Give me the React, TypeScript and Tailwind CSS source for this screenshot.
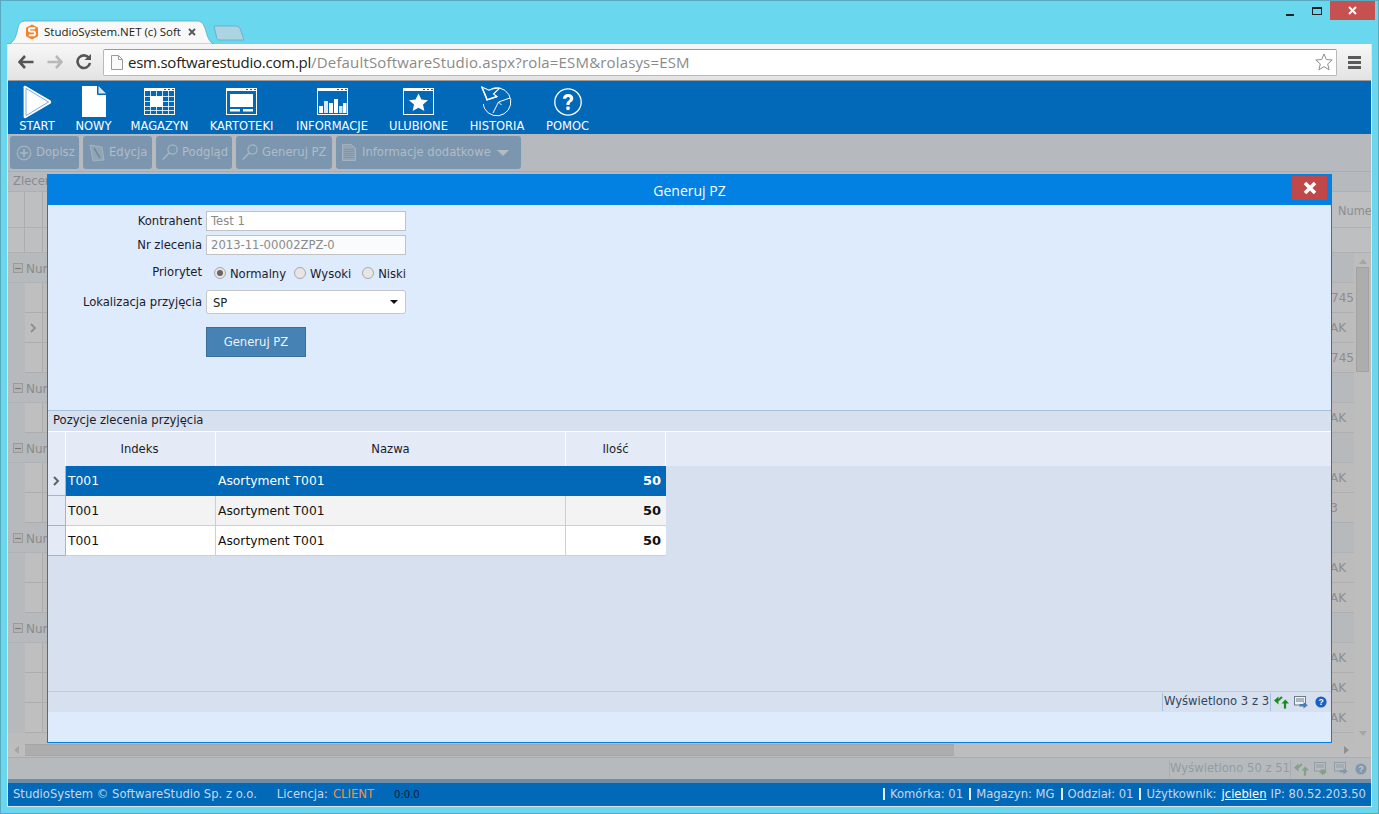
import React from "react";

const V = "font-['DejaVu_Sans',Verdana,sans-serif]";

function Play() {
  return (
    <svg width="29" height="34" viewBox="0 0 29 34">
      <path d="M2.4 0.8 L27.6 15.6 Q29 17 27.6 18.4 L2.4 33.2 Q0.6 33.6 0.6 31.8 V2.2 Q0.6 0.4 2.4 0.8 Z" fill="#fff" />
      <path d="M3 3.4 L25.6 17 L3 30.6 Z" fill="none" stroke="#5b9ad0" strokeWidth="0.8" />
    </svg>
  );
}
function Doc() {
  return (
    <svg width="24" height="31" viewBox="0 0 24 31">
      <path d="M0 0 H15 V8 Q15 9 16 9 H24 V31 H0 Z" fill="#fff" />
      <path d="M16.5 0 L24 7.5 H16.5 Z" fill="#d7e6f3" />
    </svg>
  );
}
function WinFrame({ children }: { children?: React.ReactNode }) {
  return (
    <svg width="31" height="27" viewBox="0 0 31 27">
      <rect x="0.5" y="0.5" width="30" height="26" fill="none" stroke="#fff" />
      <rect x="0" y="0" width="31" height="3" fill="#fff" />
      <rect x="20" y="1" width="2" height="1" fill="#0268b8" />
      <rect x="24" y="1" width="2" height="1" fill="#0268b8" />
      <rect x="28" y="1" width="2" height="1" fill="#0268b8" />
      {children}
    </svg>
  );
}
function Grid3() {
  return (
    <WinFrame>
      {[6.5, 12.5, 18.5, 24.5].map((x) => (
        <line key={x} x1={x} x2={x} y1="3" y2="27" stroke="#fff" strokeWidth="0.8" />
      ))}
      {[8.5, 13.5, 18.5, 22.5].map((y) => (
        <line key={y} x1="0" x2="31" y1={y} y2={y} stroke="#fff" strokeWidth="0.8" />
      ))}
      <rect x="6" y="8" width="13" height="11" fill="#fff" />
    </WinFrame>
  );
}
function Card() {
  return (
    <WinFrame>
      <rect x="4" y="6" width="23" height="13" fill="#fff" />
      <rect x="4" y="21" width="10" height="2.5" fill="#fff" />
      <rect x="17" y="21" width="10" height="2.5" fill="#fff" />
    </WinFrame>
  );
}
function Chart() {
  return (
    <WinFrame>
      <rect x="2" y="18" width="4" height="7" fill="#fff" />
      <rect x="7" y="13" width="4" height="12" fill="#d7e6f3" />
      <rect x="12" y="15" width="4" height="10" fill="#fff" />
      <rect x="17" y="11" width="4" height="14" fill="#fff" />
      <rect x="22" y="18" width="3.5" height="7" fill="#d7e6f3" />
      <rect x="26" y="15" width="3.5" height="10" fill="#fff" />
    </WinFrame>
  );
}
function StarWin() {
  return (
    <WinFrame>
      <path d="M15.5 5.5 L18.4 11.5 L25 12.2 L20 16.6 L21.4 23 L15.5 19.8 L9.6 23 L11 16.6 L6 12.2 L12.6 11.5 Z" fill="#fff" />
    </WinFrame>
  );
}
function Hist() {
  return (
    <svg width="32" height="32" viewBox="0 0 32 32">
      <path d="M8 4.2 A14 14 0 1 1 3.6 22.6" fill="none" stroke="#fff" strokeWidth="1" />
      <path d="M3.6 22.6 A14 14 0 0 1 2.4 18" fill="none" stroke="#fff" strokeWidth="1" />
      <path d="M0.8 1 L8 4.2 C11 2.6 15 1.8 18.5 2.2 L12.5 8 L16 10.5 L6.2 13.8 L4.4 9 L0.8 1 Z" fill="#0268b8" stroke="#fff" strokeWidth="1.1" />
      <path d="M0.8 1 L6 13.8 L16 10.5" fill="none" stroke="#fff" strokeWidth="1.4" />
      <path d="M29 12 L17.5 16 L12 27 M17.5 16 L20.5 19" stroke="#fff" strokeWidth="1" fill="none" />
    </svg>
  );
}
function Help() {
  return (
    <svg width="28" height="28" viewBox="0 0 28 28">
      <circle cx="14" cy="14" r="13.2" fill="none" stroke="#fff" strokeWidth="1.3" />
      <path d="M9 10.8 C9 7.8 11.2 6 14.2 6 C17.3 6 19.3 7.8 19.3 10.4 C19.3 12.4 18 13.4 16.8 14.3 C15.7 15.1 15.6 15.7 15.6 17 H12.4 C12.4 15.2 12.7 14 14.2 12.9 C15.3 12.1 15.9 11.6 15.9 10.6 C15.9 9.6 15.2 9 14.1 9 C13 9 12.3 9.8 12.2 10.8 Z" fill="#fff" />
      <rect x="12.3" y="18.6" width="3.4" height="3.4" rx="0.8" fill="#fff" />
    </svg>
  );
}

function NavItem({ w, label, children }: { w: string; label: string; children: React.ReactNode }) {
  return (
    <div className={`${w} flex flex-col items-center`}>
      <div className="h-[35px] flex items-center justify-center">{children}</div>
      <div className="text-[11.5px] leading-[13px] mt-[1px] text-white whitespace-nowrap">{label}</div>
    </div>
  );
}

function TbIconPlus() {
  return (
    <svg width="16" height="16" viewBox="0 0 16 16">
      <circle cx="8" cy="8" r="6.8" fill="none" stroke="#a9b6c2" strokeWidth="1.2" />
      <path d="M8 4 V12 M4 8 H12" stroke="#a9b6c2" strokeWidth="1.6" />
    </svg>
  );
}
function TbIconEdit() {
  return (
    <svg width="16" height="18" viewBox="0 0 16 18">
      <path d="M1 1 L13 3 L15 16 L4 17 Z" fill="#93a5b5" stroke="#a9b6c2" strokeWidth="0.8" />
      <path d="M5 4 L11 14" stroke="#6f889e" strokeWidth="1.5" />
    </svg>
  );
}
function TbIconSearch() {
  return (
    <svg width="16" height="17" viewBox="0 0 16 17">
      <circle cx="10.5" cy="5.5" r="4.6" fill="none" stroke="#a9b6c2" strokeWidth="1.2" />
      <path d="M7 9 L0.8 15.5" stroke="#a9b6c2" strokeWidth="1.6" />
    </svg>
  );
}
function TbIconDoc() {
  return (
    <svg className="mr-[2px]" width="14" height="17" viewBox="0 0 14 17">
      <path d="M0.5 0.5 H9.5 L13.5 4.5 V16.5 H0.5 Z" fill="#93a5b5" stroke="#a4b2bf" />
      {[5, 7, 9, 11, 13].map((y) => (
        <line key={y} x1="2" x2="12" y1={y + 0.5} y2={y + 0.5} stroke="#7b96ae" />
      ))}
    </svg>
  );
}

function TbButton({ w, children, label }: { w: string; children: React.ReactNode; label: string }) {
  return (
    <div className={`${w} h-[33px] rounded-[3px] bg-[#7b96ae] flex items-center gap-[4px] pl-[6px] text-[11.6px] text-[#b1bcc6] whitespace-nowrap`}>
      {children}
      <span>{label}</span>
    </div>
  );
}

function GroupRow({ label = "Num" }: { label?: string }) {
  return (
    <div className="h-[30px] flex items-center bg-[#b7babd] border-b border-[#b0b3b6]">
      <div className="w-[17px] flex justify-end pt-[1px]">
        <div className="w-[10px] h-[10px] mr-[2px] border border-[#9a9a9a] bg-[#b3b3b3] flex items-center justify-center">
          <div className="w-[6px] h-[1px] bg-[#777]" />
        </div>
      </div>
      <span className="ml-[1px] pt-[2px] text-[12px] text-[#8a8a8a]">{label}</span>
    </div>
  );
}
function DataRow({ v, chev, end = "mr-0" }: { v?: string; chev?: boolean; end?: string }) {
  return (
    <div className="h-[30px] flex bg-[#bcbcbc]">
      <div className="w-[17px] bg-[#b7babd]" />
      <div className="w-[18px] bg-[#bfbfbf] border-r border-b border-[#adadad] flex items-center justify-center">
        {chev && (
          <svg width="7" height="10" viewBox="0 0 7 10">
            <path d="M1 1 L5 5 L1 9" fill="none" stroke="#8e8e8e" strokeWidth="1.8" />
          </svg>
        )}
      </div>
      <div className="flex-1 border-b border-[#afafaf] flex items-center justify-end overflow-hidden">
        <span className={`text-[12px] text-[#8d8d8d] whitespace-nowrap ${end}`}>{v}</span>
      </div>
    </div>
  );
}

function IconCell({ children }: { children: React.ReactNode }) {
  return <div className="w-[20px] flex items-center justify-center">{children}</div>;
}
function RefreshIcon({ dim }: { dim?: boolean }) {
  const c = dim ? "#7f9f80" : "#1f8a1f";
  return (
    <svg width="15" height="14" viewBox="0 0 15 14">
      <path d="M0 5.5 L4.5 1.5 V9.5 Z" fill={c} />
      <path d="M4 5.5 L8 2" fill="none" stroke={c} strokeWidth="2" />
      <path d="M7.5 8.5 L11.3 4.5 L15 8.5 Z" fill={c} />
      <path d="M11 8 V13.6" fill="none" stroke={c} strokeWidth="2.2" />
    </svg>
  );
}
function ExportIcon({ dim, down }: { dim?: boolean; down?: boolean }) {
  const b = dim ? "#8f9aa5" : "#6d7a88";
  const a = dim ? "#7f94ab" : "#4a7cb8";
  return (
    <svg width="14" height="13" viewBox="0 0 14 13">
      <rect x="0.5" y="0.5" width="11" height="8.5" fill={dim ? "#b9bdc1" : "#eef2f7"} stroke={b} />
      <path d="M2 3 H10 M2 5 H10" stroke={b} />
      {down ? (
        <path d="M6.5 7.5 H11 V9.5 H13.5 L8.8 13 L4.5 9.5 H6.5 Z" fill={dim ? "#7f9f80" : "#1f8a1f"} />
      ) : (
        <path d="M5.5 8 H9.5 V6 L13.8 9.3 L9.5 12.6 V10.6 H5.5 Z" fill={a} />
      )}
    </svg>
  );
}
function HelpBall({ dim }: { dim?: boolean }) {
  return (
    <svg width="12" height="12" viewBox="0 0 12 12">
      <circle cx="6" cy="6" r="5.6" fill={dim ? "#7f94ab" : "#1f5fc4"} />
      <text x="6" y="9" textAnchor="middle" fontSize="8.5" fontWeight="700" fill={dim ? "#c3ccd5" : "#fff"} fontFamily="'Liberation Sans',sans-serif">?</text>
    </svg>
  );
}

function Radio({ on }: { on?: boolean }) {
  return (
    <span className="w-[12px] h-[12px] rounded-full border border-[#a8a8a8] bg-[#e6e6e6] flex items-center justify-center">
      {on && <span className="w-[6px] h-[6px] rounded-full bg-[#666]" />}
    </span>
  );
}

function ModalRow({ cls, a, b, c, chev }: { cls: string; a: string; b: string; c: string; chev?: boolean }) {
  return (
    <div className="h-[30px] flex">
      <div className="w-[18px] bg-[#e4ebf6] border-r border-b border-[#9fb6d0] flex items-center justify-center">
        {chev && (
          <svg width="7" height="10" viewBox="0 0 7 10">
            <path d="M1 1 L5 5 L1 9" fill="none" stroke="#5f5f5f" strokeWidth="1.9" />
          </svg>
        )}
      </div>
      <div className={`${cls} w-[600px] flex border-b text-[12.3px] items-center`}>
        <div className="w-[150px] h-full pl-[2px] pt-[2px] flex items-center border-r border-inherit">{a}</div>
        <div className="w-[350px] h-full pl-[2px] pt-[2px] flex items-center border-r border-inherit">{b}</div>
        <div className="w-[100px] h-full pr-[5px] flex items-center justify-end text-[13px] font-bold">{c}</div>
      </div>
    </div>
  );
}

export default function App() {
  return (
    <div className={`relative w-[1379px] h-[814px] overflow-hidden bg-[#69d7ee] border border-[#5aa9bd] ${V}`}>
      {/* caption */}
      <div className="h-[19px] flex justify-end items-start pr-[3px]">
        <div className="mt-[13px] w-[8px] h-[2px] bg-[#222] mr-[18px]" />
        <div className="mt-[6px] w-[10px] h-[8px] border border-[#222] border-t-2 mr-[8px]" />
        <div className="w-[45px] h-[19px] bg-[#c75050] flex items-center justify-center">
          <svg width="9" height="9" viewBox="0 0 9 9">
            <path d="M1 1 L8 8 M8 1 L1 8" stroke="#fff" strokeWidth="2" />
          </svg>
        </div>
      </div>

      {/* tab strip */}
      <div className="h-[24px] flex pl-[6px] items-end font-['Open_Sans',sans-serif]">
        <div className="relative w-[207px] h-[24px] flex items-center">
          <svg className="absolute inset-0" width="207" height="24" viewBox="0 0 207 24">
            <path d="M0 24 C6 24 9 18 11 8 C12 3 14 1 19 1 H190 C194 1 196 3 198 8 C200 15 202 23 207 24 Z" fill="#f8f8f8" stroke="#5aa9bd" strokeWidth="0.8" />
          </svg>
          <div className="relative ml-[19px] w-[12px] h-[15px] flex items-center justify-center">
            <svg width="13" height="16" viewBox="0 0 13 16">
              <path d="M6.5 0 L13 3.5 V12.5 L6.5 16 L0 12.5 V3.5 Z" fill="#f5822a" />
              <path d="M10 4 H5 Q3.2 4 3.2 5.6 Q3.2 7.4 5 7.4 H8 Q9.8 7.4 9.8 9.6 Q9.8 11.6 8 11.6 H3" fill="none" stroke="#fff" strokeWidth="2.1" />
            </svg>
          </div>
          <span className="relative ml-[6px] w-[137px] overflow-hidden whitespace-nowrap text-[11.5px] text-[#222] leading-none font-['Open_Sans',sans-serif]">StudioSystem.NET (c) Soft</span>
          <svg className="relative ml-[7px]" width="8" height="8" viewBox="0 0 8 8">
            <path d="M1 1 L7 7 M7 1 L1 7" stroke="#555" strokeWidth="1.8" />
          </svg>
        </div>
        <svg className="mb-[3px] -ml-[1px]" width="31" height="16" viewBox="0 0 31 16">
          <path d="M1 1 H23 C26 1 27 3 28 6 L31 15 H7 C5 15 4 14 3.5 12 Z" fill="#acd5e3" stroke="#6fb1c5" />
        </svg>
      </div>

      {/* browser body */}
      <div className="mx-[6px] w-[1365px] h-[763px] flex flex-col border-x border-b border-[#e4e4e4]">
        {/* address toolbar */}
        <div className="h-[37px] bg-gradient-to-b from-[#f7f7f7] to-[#e3e3e3] border-b border-[#9a9a9a] flex items-center">
          <svg className="ml-[10px]" width="16" height="14" viewBox="0 0 16 14">
            <path d="M7 1 L1.5 7 L7 13 M2 7 H15.5" fill="none" stroke="#555" strokeWidth="2.6" />
          </svg>
          <svg className="ml-[13px]" width="16" height="14" viewBox="0 0 16 14">
            <path d="M9 1 L14.5 7 L9 13 M14 7 H0.5" fill="none" stroke="#b8b8b8" strokeWidth="2.6" />
          </svg>
          <svg className="ml-[12px]" width="17" height="16" viewBox="0 0 17 16">
            <path d="M14 4 A6.3 6.3 0 1 0 15 9" fill="none" stroke="#555" strokeWidth="2.6" />
            <path d="M9.5 6 H16 V0 Z" fill="#555" />
          </svg>
          <div className="ml-[11px] w-[1234px] h-[27px] bg-white border border-[#b9b9b9] border-t-[#999] rounded-[2px] flex items-center">
            <svg className="ml-[7px]" width="12" height="15" viewBox="0 0 12 15">
              <path d="M0.5 0.5 H7.5 L11.5 4.5 V14.5 H0.5 Z M7.5 0.5 V4.5 H11.5" fill="#fafafa" stroke="#9a9a9a" />
            </svg>
            <span className="ml-[5px] text-[15px] leading-none whitespace-nowrap text-[#222] font-['Open_Sans',sans-serif] tracking-[-0.24px]">
              esm.softwarestudio.com.pl<span className="text-[#8a8a8a] tracking-[0.16px]">/DefaultSoftwareStudio.aspx?rola=ESM&amp;rolasys=ESM</span>
            </span>
            <svg className="ml-auto mr-[3px]" width="18" height="18" viewBox="0 0 18 18">
              <path d="M9 1 L11.3 6.5 L17.2 7 L12.7 10.9 L14.1 16.8 L9 13.6 L3.9 16.8 L5.3 10.9 L0.8 7 L6.7 6.5 Z" fill="#fff" stroke="#8e8e8e" strokeWidth="1" />
            </svg>
          </div>
          <div className="ml-[11px] w-[13px] flex flex-col gap-[2px]">
            <div className="h-[3px] bg-[#5a5a5a]" />
            <div className="h-[3px] bg-[#5a5a5a]" />
            <div className="h-[3px] bg-[#5a5a5a]" />
          </div>
        </div>

        {/* nav */}
        <div className="h-[53px] bg-[#0268b8] flex gap-[20px] pl-[10px] pt-[3px] shrink-0">
          <NavItem w="w-[38px]" label="START"><Play /></NavItem>
          <NavItem w="w-[35px]" label="NOWY"><Doc /></NavItem>
          <NavItem w="w-[57px]" label="MAGAZYN"><Grid3 /></NavItem>
          <NavItem w="w-[67px]" label="KARTOTEKI"><Card /></NavItem>
          <NavItem w="w-[74px]" label="INFORMACJE"><Chart /></NavItem>
          <NavItem w="w-[59px]" label="ULUBIONE"><StarWin /></NavItem>
          <NavItem w="w-[58px]" label="HISTORIA"><Hist /></NavItem>
          <NavItem w="w-[43px]" label="POMOC"><Help /></NavItem>
        </div>

        {/* app toolbar */}
        <div className="h-[38px] bg-[#b6babe] flex gap-[4px] pl-[2px] pt-[2px] border-b border-[#a9adb1] shrink-0">
          <TbButton w="w-[69px]" label="Dopisz"><TbIconPlus /></TbButton>
          <TbButton w="w-[69px]" label="Edycja"><TbIconEdit /></TbButton>
          <TbButton w="w-[76px]" label="Podgląd"><TbIconSearch /></TbButton>
          <TbButton w="w-[96px]" label="Generuj PZ"><TbIconSearch /></TbButton>
          <TbButton w="w-[185px]" label="Informacje dodatkowe">
            <TbIconDoc />
            <span className="order-last ml-[2px] w-0 h-0 border-x-[6px] border-x-transparent border-t-[6px] border-t-[#b1bcc6]" />
          </TbButton>
        </div>

        {/* background grid + scrollbar */}
        <div className="flex-1 flex flex-col min-h-0 bg-[#bcbcbc] overflow-hidden">
          <div className="h-[20px] bg-[#b6babe] text-[11.6px] text-[#8a8a8a] flex items-center pl-[5px] border-b border-[#adb0b3] shrink-0">Zlecenia</div>
          <div className="h-[36px] flex shrink-0 bg-[#bebfc1] border-b border-[#b0b0b0]">
            <div className="w-[17px] border-r border-[#adadad]" />
            <div className="w-[18px] border-r border-[#adadad]" />
            <div className="flex-1 flex justify-end items-center">
              <span className="mr-[15px] pt-[4px] text-[11.4px] text-[#8d8d8d] w-[18px] whitespace-nowrap overflow-visible">Nume</span>
            </div>
          </div>
          <div className="h-[25px] flex shrink-0 bg-[#bebfc1] border-b border-[#b0b0b0]">
            <div className="w-[17px] border-r border-[#adadad]" />
            <div className="w-[18px] border-r border-[#adadad]" />
          </div>
          <div className="flex flex-1 min-h-0">
            <div className="flex-1 min-w-0 flex flex-col">
              <GroupRow />
              <DataRow v="745" />
              <DataRow v="AK" chev end="mr-[8px]" />
              <DataRow v="745" />
              <GroupRow />
              <DataRow v="AK" end="mr-[8px]" />
              <GroupRow />
              <DataRow v="AK" end="mr-[8px]" />
              <DataRow v="3" end="mr-[16px]" />
              <GroupRow />
              <DataRow v="AK" end="mr-[8px]" />
              <DataRow v="AK" end="mr-[8px]" />
              <GroupRow />
              <DataRow v="AK" end="mr-[8px]" />
              <DataRow v="AK" end="mr-[8px]" />
              <DataRow v="AK" end="mr-[8px]" />
            </div>
            <div className="w-[17px] bg-[#bdbdbd] flex flex-col items-center shrink-0 pt-[6px]">
              <span className="w-0 h-0 border-x-[4px] border-x-transparent border-b-[5px] border-b-[#a5a5a5]" />
              <div className="mt-[3px] w-[13px] h-[105px] bg-[#adadad] border border-[#a2a2a2]" />
              <span className="mt-auto mb-[7px] w-0 h-0 border-x-[4px] border-x-transparent border-t-[5px] border-t-[#a5a5a5]" />
            </div>
          </div>
          <div className="h-[14px] shrink-0 flex items-center bg-[#bdbdbd]">
            <span className="ml-[6px] w-0 h-0 border-y-[4px] border-y-transparent border-r-[5px] border-r-[#a5a5a5]" />
            <div className="ml-[6px] w-[929px] h-[12px] bg-[#adadad] border-y border-[#a5a5a5]" />
            <span className="ml-auto mr-[22px] w-0 h-0 border-y-[4px] border-y-transparent border-l-[5px] border-l-[#8f8f8f]" />
          </div>
          <div className="h-[22px] shrink-0 bg-[#b7babd] border-t border-[#a7acb3] flex items-center justify-end text-[11.6px] text-[#959a9f]">
            <div className="w-[122px] h-[18px] border-x border-[#a9adb1] flex items-center justify-center whitespace-nowrap">Wyświetlono 50 z 51</div>
            <div className="flex items-center opacity-90">
              <IconCell><RefreshIcon dim /></IconCell>
              <IconCell><ExportIcon dim down /></IconCell>
              <IconCell><ExportIcon dim /></IconCell>
              <IconCell><HelpBall dim /></IconCell>
            </div>
          </div>
          <div className="h-[4px] shrink-0 bg-[#6d8ea8]" />
        </div>

        {/* status */}
        <div className="h-[23px] shrink-0 bg-[#0268b8] flex items-center text-[11.6px] text-[#c5d8ea] whitespace-nowrap pl-[5px] pr-[5px]">
          <span>StudioSystem © SoftwareStudio Sp. z o.o.</span>
          <span className="ml-[20px]">Licencja:</span>
          <span className="ml-[5px] text-[#f59342]">CLIENT</span>
          <span className="ml-[20px] text-[10px] text-[#06203a] -mt-[1px]">0:0.0</span>
          <div className="ml-auto flex items-center">
            <span className="border-l-2 border-[#e3eef7] pl-[5px] mr-[6px] leading-[12px]">Komórka: 01</span>
            <span className="border-l-2 border-[#e3eef7] pl-[5px] mr-[6px] leading-[12px]">Magazyn: MG</span>
            <span className="border-l-2 border-[#e3eef7] pl-[5px] mr-[6px] leading-[12px]">Oddział: 01</span>
            <span className="border-l-2 border-[#e3eef7] pl-[5px] leading-[12px]">Użytkownik:</span>
            <span className="ml-[5px] text-white underline">jciebien</span>
            <span className="ml-[4px]">IP: 80.52.203.50</span>
          </div>
        </div>
      </div>

      {/* modal */}
      <div className="absolute left-[46px] top-[173px] w-[1285px] h-[569px] flex flex-col border border-[#0281e3] bg-[#deebfd] text-[11.6px] text-[#1b1b2b]">
        <div className="relative h-[30px] shrink-0 bg-[#0281e3] text-white text-[14px] font-['Open_Sans',sans-serif] flex items-center justify-center">
          Generuj PZ
          <div className="absolute right-[4px] top-[1px] w-[35px] h-[24px] bg-[#c04848] flex items-center justify-center">
            <svg width="14" height="14" viewBox="0 0 14 14">
              <path d="M2 2 L12 12 M12 2 L2 12" stroke="#fff" strokeWidth="3.6" />
            </svg>
          </div>
        </div>

        <div className="h-[205px] shrink-0 grid grid-cols-[154px_200px] gap-x-[4px] content-start pt-[6px]">
          <div className="h-[20px] pt-[1px] flex items-center justify-end">Kontrahent</div>
          <div className="h-[20px] pt-[2px] border border-[#c2c2c2] bg-white flex items-center pl-[4px] text-[#8a8a8a]">Test 1</div>
          <div className="h-[20px] pt-[1px] mt-[4px] flex items-center justify-end">Nr zlecenia</div>
          <div className="h-[20px] pt-[1px] mt-[4px] border border-[#c2c2c2] bg-[#fafbfd] flex items-center pl-[4px] text-[#8a8a8a]">2013-11-00002ZPZ-0</div>
          <div className="h-[18px] mt-[9px] flex items-center justify-end">Priorytet</div>
          <div className="h-[18px] mt-[9px] flex items-center pl-[8px] gap-[4px]">
            <Radio on /><span className="mt-[4px] mr-[4px]">Normalny</span>
            <Radio /><span className="mt-[4px] mr-[7px]">Wysoki</span>
            <Radio /><span className="mt-[4px]">Niski</span>
          </div>
          <div className="h-[24px] pt-[2px] mt-[8px] flex items-center justify-end">Lokalizacja przyjęcia</div>
          <div className="h-[24px] pt-[3px] mt-[8px] border border-[#c6c6c6] rounded-[3px] bg-white text-[#222] flex items-center pl-[6px] pr-[7px] justify-between">
            SP
            <span className="-mt-[3px] w-0 h-0 border-x-[4px] border-x-transparent border-t-[4px] border-t-[#111]" />
          </div>
          <div className="col-start-2 mt-[13px] pt-[2px] w-[100px] h-[30px] bg-[#4682b4] border border-[#3a6d98] text-[#eef4fa] flex items-center justify-center">Generuj PZ</div>
        </div>

        <div className="h-[21px] shrink-0 bg-[#d6e0ef] border-t border-[#a9bfdb] pl-[5px] flex items-center">Pozycje zlecenia przyjęcia</div>

        <div className="h-[260px] shrink-0 bg-[#d6e0ef] flex flex-col">
          <div className="h-[35px] flex shrink-0 border-t border-white bg-[#e4ebf6]">
            <div className="w-[18px] border-r border-white" />
            <div className="w-[150px] pt-[2px] border-r border-white flex items-center justify-center pr-[2px]">Indeks</div>
            <div className="w-[350px] pt-[2px] border-r border-white flex items-center justify-center">Nazwa</div>
            <div className="w-[100px] pt-[2px] border-r border-white flex items-center justify-center">Ilość</div>
          </div>
          <ModalRow cls="bg-[#0268b8] text-white border-[#0268b8]" a="T001" b="Asortyment T001" c="50" chev />
          <ModalRow cls="bg-[#f3f3f3] text-[#111] border-[#cfcfcf]" a="T001" b="Asortyment T001" c="50" />
          <ModalRow cls="bg-white text-[#111] border-[#cfcfcf]" a="T001" b="Asortyment T001" c="50" />
        </div>

        <div className="h-[21px] shrink-0 bg-[#d6e0ef] border-t border-[#bccbe0] flex items-center justify-end text-[#33465c]">
          <div className="w-[109px] h-[18px] border-x border-[#a9bfdb] flex items-center justify-center whitespace-nowrap">Wyświetlono 3 z 3</div>
          <div className="flex items-center">
            <IconCell><RefreshIcon /></IconCell>
            <IconCell><ExportIcon /></IconCell>
            <IconCell><HelpBall /></IconCell>
          </div>
        </div>
      </div>
    </div>
  );
}
